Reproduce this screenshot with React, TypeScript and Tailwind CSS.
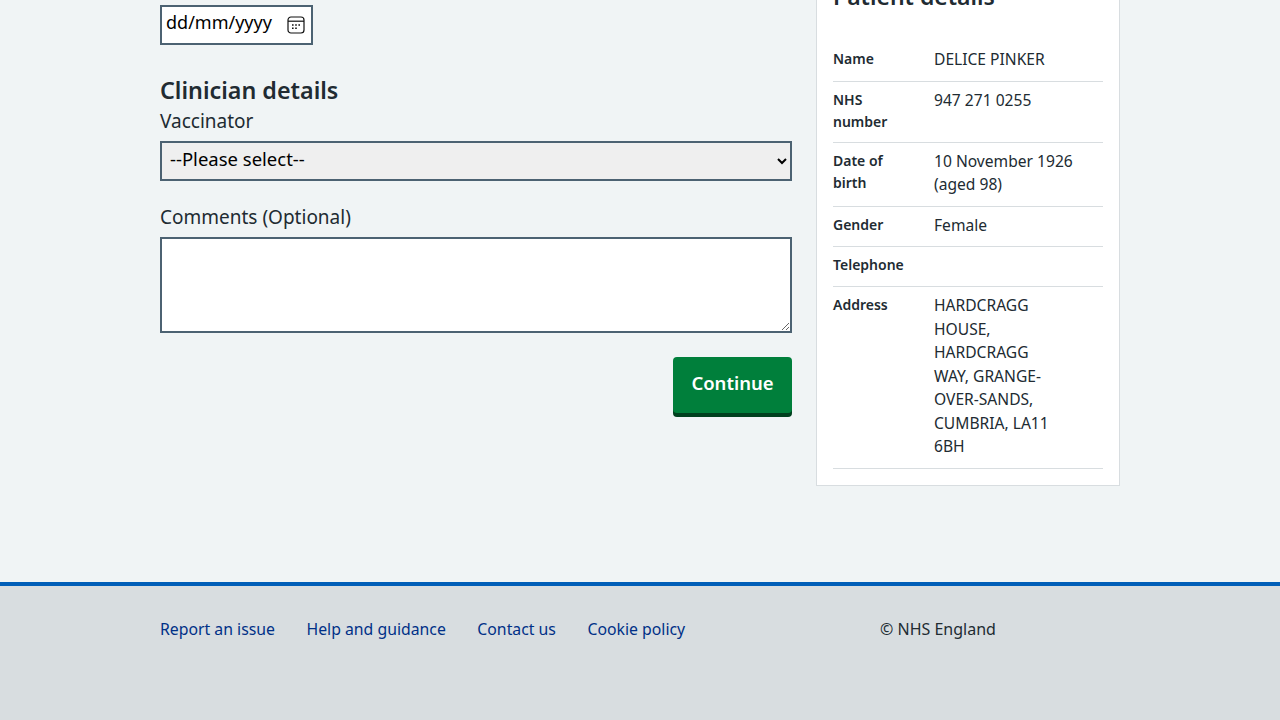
import React from 'react';

const patientRows = [
  { label: 'Name', value: ['DELICE PINKER'] },
  { label: 'NHS number', value: ['947 271 0255'] },
  { label: 'Date of birth', value: ['10 November 1926', '(aged 98)'] },
  { label: 'Gender', value: ['Female'] },
  { label: 'Telephone', value: [] },
  {
    label: 'Address',
    value: ['HARDCRAGG', 'HOUSE,', 'HARDCRAGG', 'WAY, GRANGE-', 'OVER-SANDS,', 'CUMBRIA, LA11', '6BH'],
  },
];

const footerLinks = ['Report an issue', 'Help and guidance', 'Contact us', 'Cookie policy'];

const CalendarIcon = () => (
  <svg width="18" height="18" viewBox="0 0 18 18" fill="none" className="shrink-0">
    <rect x="1" y="1" width="16" height="16" rx="3" stroke="#111" strokeWidth="1.2" />
    <path d="M1 5.2h16" stroke="#111" strokeWidth="1.2" />
    <path d="M5 8.2h1.6v1.6H5zM8.2 8.2h1.6v1.6H8.2zM11.4 8.2H13v1.6h-1.6zM5 11.4h1.6V13H5zM8.2 11.4h1.6V13H8.2z" fill="#111" />
  </svg>
);

const App = () => {
  return (
    <div className="h-[720px] overflow-hidden bg-[#f0f4f5] text-[#212b32] font-['Noto_Sans',sans-serif]">
      <main className="mx-auto flex h-[582px] w-[960px] items-start gap-6">
        {/* Vaccination form */}
        <form className="mt-[5px] w-[632px] shrink-0">
          <div className="flex h-10 w-[153px] items-center justify-between border-2 border-[#4c6272] bg-white pb-[5px] pl-1 pr-[6px] text-[18px] text-black">
            <span>dd/mm/yyyy</span>
            <span className="pt-[5px]"><CalendarIcon /></span>
          </div>

          <h2 className="mt-[28px] text-[23.3px] font-semibold leading-[34px]">Clinician details</h2>
          <label className="block text-[19px] leading-[28px]">Vaccinator</label>
          <select className="mt-[6px] h-10 w-full border-2 border-[#4c6272] bg-[#efefef] pb-[6px] pl-1 text-[18.5px] text-black">
            <option>--Please select--</option>
          </select>

          <label className="mt-[22px] block text-[19px] leading-[28px]">Comments (Optional)</label>
          <textarea className="mt-[6px] block h-24 w-full border-2 border-[#4c6272] bg-white" />

          <div className="mt-6 flex justify-end">
            <button
              type="button"
              className="h-14 w-[119px] rounded-[4px] bg-[#007f3b] pb-[5px] text-[18.5px] font-semibold text-white shadow-[0_4px_0_#00401e]"
            >
              Continue
            </button>
          </div>
        </form>

        {/* Patient details */}
        <aside className="-mt-[22px] w-[304px] shrink-0 border border-[#d8dde0] bg-white px-4 pb-4">
          <h2 className="text-[23px] font-semibold leading-[34px]">Patient details</h2>
          <dl className="mt-[28px]">
            {patientRows.map((row) => (
              <div key={row.label} className="flex border-b border-[#d8dde0] pb-[9px] pt-[7px]">
                <dt className="w-[101px] shrink-0 pr-6 text-[14px] font-semibold leading-[22px]">{row.label}</dt>
                <dd className="min-h-[23px] text-[15.6px] leading-[23.5px]">
                  {row.value.map((line) => (
                    <div key={line}>{line}</div>
                  ))}
                </dd>
              </div>
            ))}
          </dl>
        </aside>
      </main>

      <footer className="h-[138px] border-t-4 border-[#005eb8] bg-[#d8dde0]">
        <div className="mx-auto flex w-[960px] pt-[31px] leading-6">
          <ul className="flex w-[720px] shrink-0 gap-[31.5px] text-[15.8px] text-[#003087]">
            {footerLinks.map((link) => (
              <li key={link}>{link}</li>
            ))}
          </ul>
          <p className="text-[16px]">© NHS England</p>
        </div>
      </footer>
    </div>
  );
};

export default App;
